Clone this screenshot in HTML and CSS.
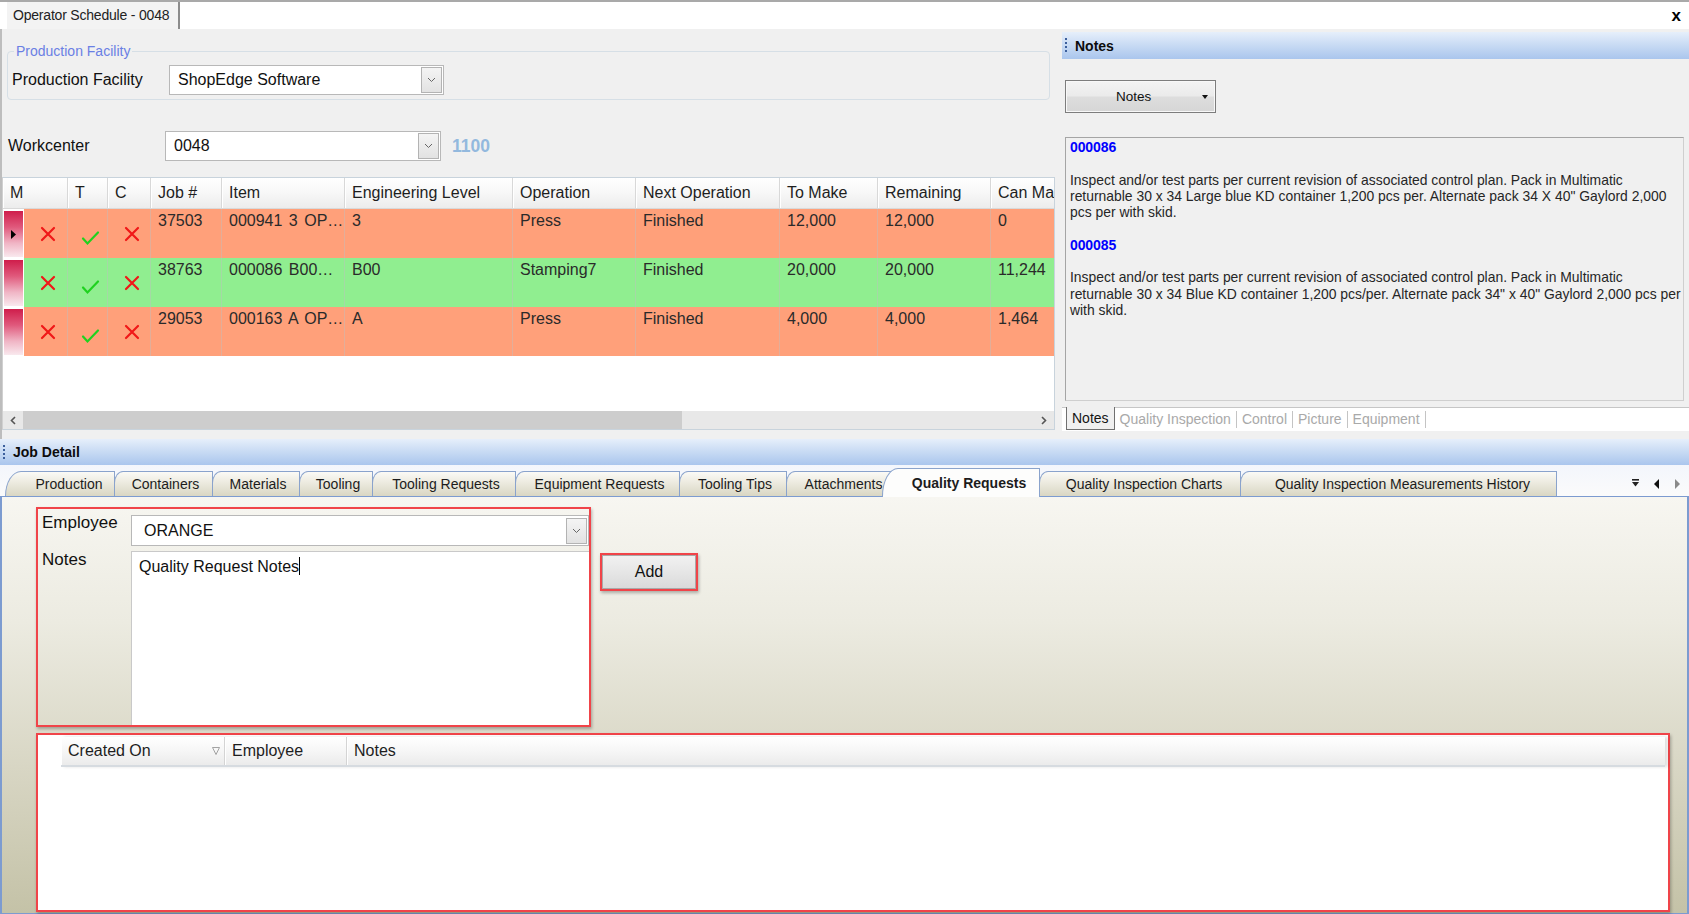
FILE: index.html
```html
<!DOCTYPE html>
<html lang="en">
<head>
<meta charset="utf-8">
<title>Operator Schedule - 0048</title>
<link rel="stylesheet" href="styles.css">
</head>
<body>
<div class="app">
  <header class="doctabs">
    <div class="doctab">Operator Schedule - 0048</div>
    <div class="doc-close">x</div>
  </header>

  <section class="top">
    <div class="left">
      <fieldset class="group">
        <legend>Production Facility</legend>
        <div class="field-row">
          <span class="lbl pf-lbl">Production Facility</span>
          <div class="combo pf-combo"><span class="combo-val">ShopEdge Software</span><span class="drop"><svg width="9" height="6" viewBox="0 0 9 6"><path d="M1 1 L4.5 4.5 L8 1" stroke="#666" stroke-width="1" fill="none"/></svg></span></div>
        </div>
      </fieldset>

      <div class="wc-row">
        <span class="lbl wc-lbl">Workcenter</span>
        <div class="combo wc-combo"><span class="combo-val">0048</span><span class="drop"><svg width="9" height="6" viewBox="0 0 9 6"><path d="M1 1 L4.5 4.5 L8 1" stroke="#666" stroke-width="1" fill="none"/></svg></span></div>
        <span class="wc-num">1100</span>
      </div>

      <div class="grid">
        <div class="grid-body">
          <div class="g-row g-head">
            <div class="hc hc-m">M</div>
            <div class="hc">T</div>
            <div class="hc">C</div>
            <div class="hc">Job #</div>
            <div class="hc">Item</div>
            <div class="hc">Engineering Level</div>
            <div class="hc">Operation</div>
            <div class="hc">Next Operation</div>
            <div class="hc">To Make</div>
            <div class="hc">Remaining</div>
            <div class="hc">Can Make</div>
          </div>

          <div class="g-row g-data salmon">
            <div class="sel"><span class="sel-bar"><svg class="sel-arrow" width="5" height="9" viewBox="0 0 5 9"><path d="M0 0 L5 4.5 L0 9Z" fill="#000"/></svg></span></div>
            <div class="c c-icon"><svg width="18" height="18" viewBox="0 0 18 18"><path d="M3 3 L15 15 M15 3 L3 15" stroke="#f01818" stroke-width="2.2" stroke-linecap="round"/></svg></div>
            <div class="c c-icon c-chk"><svg width="19" height="16" viewBox="0 0 19 16"><path d="M2 8.5 L6.5 13.5 L17 2.5" stroke="#1fd21f" stroke-width="2.2" fill="none" stroke-linecap="round"/></svg></div>
            <div class="c c-icon"><svg width="18" height="18" viewBox="0 0 18 18"><path d="M3 3 L15 15 M15 3 L3 15" stroke="#f01818" stroke-width="2.2" stroke-linecap="round"/></svg></div>
            <div class="c">37503</div>
            <div class="c c-item">000941 3 OP…</div>
            <div class="c">3</div>
            <div class="c">Press</div>
            <div class="c">Finished</div>
            <div class="c">12,000</div>
            <div class="c">12,000</div>
            <div class="c">0</div>
          </div>

          <div class="g-row g-data green">
            <div class="sel"><span class="sel-bar"></span></div>
            <div class="c c-icon"><svg width="18" height="18" viewBox="0 0 18 18"><path d="M3 3 L15 15 M15 3 L3 15" stroke="#f01818" stroke-width="2.2" stroke-linecap="round"/></svg></div>
            <div class="c c-icon c-chk"><svg width="19" height="16" viewBox="0 0 19 16"><path d="M2 8.5 L6.5 13.5 L17 2.5" stroke="#1fd21f" stroke-width="2.2" fill="none" stroke-linecap="round"/></svg></div>
            <div class="c c-icon"><svg width="18" height="18" viewBox="0 0 18 18"><path d="M3 3 L15 15 M15 3 L3 15" stroke="#f01818" stroke-width="2.2" stroke-linecap="round"/></svg></div>
            <div class="c">38763</div>
            <div class="c c-item">000086 B00…</div>
            <div class="c">B00</div>
            <div class="c">Stamping7</div>
            <div class="c">Finished</div>
            <div class="c">20,000</div>
            <div class="c">20,000</div>
            <div class="c">11,244</div>
          </div>

          <div class="g-row g-data salmon">
            <div class="sel"><span class="sel-bar"></span></div>
            <div class="c c-icon"><svg width="18" height="18" viewBox="0 0 18 18"><path d="M3 3 L15 15 M15 3 L3 15" stroke="#f01818" stroke-width="2.2" stroke-linecap="round"/></svg></div>
            <div class="c c-icon c-chk"><svg width="19" height="16" viewBox="0 0 19 16"><path d="M2 8.5 L6.5 13.5 L17 2.5" stroke="#1fd21f" stroke-width="2.2" fill="none" stroke-linecap="round"/></svg></div>
            <div class="c c-icon"><svg width="18" height="18" viewBox="0 0 18 18"><path d="M3 3 L15 15 M15 3 L3 15" stroke="#f01818" stroke-width="2.2" stroke-linecap="round"/></svg></div>
            <div class="c">29053</div>
            <div class="c c-item">000163 A OP…</div>
            <div class="c">A</div>
            <div class="c">Press</div>
            <div class="c">Finished</div>
            <div class="c">4,000</div>
            <div class="c">4,000</div>
            <div class="c">1,464</div>
          </div>
        </div>

        <div class="hscroll">
          <span class="sb-arrow"><svg width="6" height="9" viewBox="0 0 6 9"><path d="M5 1 L1.5 4.5 L5 8" stroke="#555" stroke-width="1.6" fill="none"/></svg></span>
          <span class="sb-thumb"></span>
          <span class="sb-track"></span>
          <span class="sb-arrow"><svg width="6" height="9" viewBox="0 0 6 9"><path d="M1 1 L4.5 4.5 L1 8" stroke="#555" stroke-width="1.6" fill="none"/></svg></span>
        </div>
      </div>
    </div>

    <aside class="right">
      <div class="panel-head notes-head"><span class="grip"></span>Notes</div>
      <div class="notes-btn"><span class="nb-text">Notes</span><svg class="nb-caret" width="6" height="4" viewBox="0 0 6 4"><path d="M0 0 H6 L3 4Z" fill="#111"/></svg></div>
      <div class="notes-box">
        <div class="note-id">000086</div>
        <p class="note-p">Inspect and/or test parts per current revision of associated control plan. Pack in Multimatic<br>returnable 30 x 34 Large blue KD container 1,200 pcs per. Alternate pack 34 X 40" Gaylord 2,000<br>pcs per with skid.</p>
        <div class="note-id">000085</div>
        <p class="note-p">Inspect and/or test parts per current revision of associated control plan. Pack in Multimatic<br>returnable 30 x 34 Blue KD container 1,200 pcs/per. Alternate pack 34" x 40" Gaylord 2,000 pcs per<br>with skid.</p>
      </div>
      <nav class="note-tabs">
        <span class="ntab ntab-active">Notes</span>
        <span class="ntab">Quality Inspection</span>
        <span class="ntab">Control</span>
        <span class="ntab">Picture</span>
        <span class="ntab">Equipment</span>
      </nav>
    </aside>
  </section>

  <section class="detail">
    <div class="panel-head detail-head"><span class="grip"></span>Job Detail</div>
    <nav class="tabstrip">
      <span class="tab tab-first">Production</span>
      <span class="tab w-cont">Containers</span>
      <span class="tab w-mat">Materials</span>
      <span class="tab w-tool">Tooling</span>
      <span class="tab w-treq">Tooling Requests</span>
      <span class="tab w-ereq">Equipment Requests</span>
      <span class="tab w-tips">Tooling Tips</span>
      <span class="tab w-att">Attachments</span>
      <span class="tab tab-active">Quality Requests</span>
      <span class="tab w-qic">Quality Inspection Charts</span>
      <span class="tab w-qimh">Quality Inspection Measurements History</span>
      <span class="tab-tools">
        <svg width="9" height="9" viewBox="0 0 9 9"><rect x="1" y="0" width="7" height="1.6" fill="#222"/><path d="M1 3 H8 L4.5 7.5Z" fill="#222"/></svg>
        <svg width="6" height="10" viewBox="0 0 6 10"><path d="M5 0 V10 L0 5Z" fill="#111"/></svg>
        <svg width="6" height="10" viewBox="0 0 6 10"><path d="M1 0 V10 L6 5Z" fill="#8a8a8a"/></svg>
      </span>
    </nav>

    <div class="content">
      <div class="qr-top">
        <div class="redbox qr-form">
          <span class="qr-lbl">Employee</span>
          <div class="combo emp-combo"><span class="combo-val">ORANGE</span><span class="drop"><svg width="9" height="6" viewBox="0 0 9 6"><path d="M1 1 L4.5 4.5 L8 1" stroke="#666" stroke-width="1" fill="none"/></svg></span></div>
          <span class="qr-lbl">Notes</span>
          <div class="qr-notes">Quality Request Notes<span class="caret"></span></div>
        </div>
        <div class="redbox add-wrap"><button class="add-btn" type="button">Add</button></div>
      </div>

      <div class="redbox qr-grid">
        <div class="qg-head">
          <div class="qh qh-created">Created On<svg class="sort" width="8" height="8" viewBox="0 0 8 8"><path d="M0.5 0.5 H7.5 L4 7.5Z" stroke="#999" stroke-width="0.9" fill="none"/></svg></div>
          <div class="qh qh-emp">Employee</div>
          <div class="qh qh-notes">Notes</div>
        </div>
      </div>
    </div>
  </section>
</div>
</body>
</html>
```

FILE: styles.css
```css
* { box-sizing: border-box; }
html, body { margin: 0; padding: 0; }
body {
  width: 1689px;
  height: 914px;
  overflow: hidden;
  background: #f0f0f0;
  font-family: "Liberation Sans", Arial, sans-serif;
  color: #1b1b1b;
}
.app { display: flex; flex-direction: column; height: 914px; }

/* document tab bar */
.doctabs {
  flex: none;
  height: 29px;
  display: flex;
  align-items: flex-end;
  background: #fff;
  border-top: 2px solid #a9a9a9;
}
.doctab {
  height: 27px;
  margin-left: 7px;
  padding: 0 9px 0 6px;
  background: #f3f3f3;
  border-right: 2px solid #8c8c8c;
  font-size: 14px;
  line-height: 27px;
  color: #222;
  letter-spacing: -0.2px;
}
.doc-close {
  margin-left: auto;
  margin-right: 8px;
  align-self: center;
  font-weight: bold;
  font-size: 17px;
  line-height: 17px;
  color: #000;
}

/* upper area */
.top { flex: none; height: 410px; display: flex; }
.left {
  flex: none;
  width: 1062px;
  border-left: 2px solid #bdbdbd;
  display: flex;
  flex-direction: column;
}
.group {
  margin: 15px 0 0 5px;
  width: 1043px;
  padding: 7px 0 4px 4px;
  border: 1px solid #d6dfe6;
  border-radius: 4px;
  min-width: 0;
}
.group legend {
  padding: 0 2px;
  margin-left: 2px;
  font-size: 14px;
  line-height: 14px;
  color: #6a7fe4;
}
.field-row { display: flex; align-items: center; height: 30px; }
.lbl { font-size: 16px; color: #111; }
.pf-lbl { width: 157px; }

.combo {
  display: flex;
  align-items: center;
  height: 30px;
  background: #fff;
  border: 1px solid #b8b8b8;
  font-size: 16px;
  color: #111;
}
.combo-val { flex: 1; padding-left: 8px; white-space: nowrap; }
.drop {
  flex: none;
  width: 21px;
  height: 26px;
  margin-right: 1px;
  border: 1px solid #b3b3b3;
  background: linear-gradient(#f4f4f4, #e2e2e2);
  display: flex;
  align-items: center;
  justify-content: center;
}
.pf-combo { width: 275px; }

.wc-row { display: flex; align-items: center; height: 30px; margin-top: 31px; padding-left: 6px; }
.wc-lbl { width: 157px; }
.wc-combo { width: 276px; }
.wc-num { margin-left: 11px; font-size: 17.5px; font-weight: bold; color: #93b9de; }

/* job grid */
.grid {
  margin-top: 16px;
  width: 1053px;
  height: 253px;
  border: 1px solid #c8d3dc;
  border-left-color: #d0d0d0;
  background: #fff;
  display: flex;
  flex-direction: column;
  overflow: hidden;
}
.grid-body { flex: 1; overflow: hidden; }
.g-row {
  display: grid;
  grid-template-columns: 21px 44px 40px 43px 71px 123px 168px 123px 144px 98px 113px 90px;
  width: max-content;
}
.g-head {
  height: 31px;
  background: linear-gradient(#ffffff, #f7f7f7 50%, #ececec);
  border-bottom: 1px solid #d9d9d9;
}
.hc {
  display: flex;
  align-items: center;
  padding-left: 7px;
  font-size: 16px;
  color: #1e1e1e;
  border-right: 1px solid #d8d8d8;
  box-shadow: inset 1px 0 0 #ffffff;
  white-space: nowrap;
  overflow: hidden;
}
.hc-m { grid-column: span 2; }

.g-data { height: 49px; }
.sel { background: #fff; padding: 2px 1px 1px 1px; }
.sel-bar {
  display: flex;
  align-items: center;
  height: 100%;
  padding-left: 7px;
  background: linear-gradient(#cf1d4b, #e0597c 35%, #f0b5c5 70%, #f9e9ee);
}
.c {
  font-size: 16px;
  color: #2a2a2a;
  padding: 3px 0 0 7px;
  white-space: pre;
  overflow: hidden;
  border-right: 1px solid rgba(190, 190, 190, 0.45);
}
.c-item { word-spacing: 2px; }
.salmon .c { background: #ffa07a; }
.green .c { background: #90ee90; }
.c-icon { display: flex; align-items: center; justify-content: center; padding: 0 0 0 5px; }
.c-chk svg { margin-top: 8px; }

.hscroll { flex: none; height: 18px; display: flex; align-items: center; background: #e8e8e8; }
.sb-arrow { width: 20px; display: flex; justify-content: center; }
.sb-thumb { width: 659px; height: 18px; background: #cdcdcd; }
.sb-track { flex: 1; }

/* right panel */
.right { flex: 1; display: flex; flex-direction: column; }
.panel-head {
  display: flex;
  align-items: center;
  font-weight: bold;
  font-size: 14px;
  color: #0c0c0c;
  background: linear-gradient(#e6effb, #cadcf4 45%, #aac6ed);
}
.grip {
  width: 2px;
  height: 15px;
  margin: 0 8px 0 3px;
  background: repeating-linear-gradient(#3c5f9c 0 2px, transparent 2px 4px);
}
.notes-head { height: 27px; margin-top: 3px; }

.notes-btn {
  margin: 21px 0 0 3px;
  width: 151px;
  height: 33px;
  display: flex;
  align-items: center;
  border: 1px solid #7d7d7d;
  box-shadow: inset 0 0 0 1px #f8f8f8;
  background: linear-gradient(#f3f3f3, #ebebeb 48%, #dddddd 52%, #d6d6d6);
  font-size: 13.5px;
  color: #111;
}
.nb-text { margin-left: 50px; }
.nb-caret { margin-left: 51px; }

.notes-box {
  margin: 24px 0 0 3px;
  width: 619px;
  height: 264px;
  padding: 1px 4px 0 4px;
  border: 1px solid #a5a5a5;
  border-right-color: #cfcfcf;
  border-bottom-color: #cfcfcf;
  background: #f0f0f0;
  font-size: 13.9px;
  line-height: 16.3px;
  color: #262626;
  white-space: nowrap;
  overflow: hidden;
}
.note-id {
  color: #0000ff;
  font-weight: bold;
  font-size: 14px;
  letter-spacing: -0.1px;
  margin-bottom: 16.3px;
}
.note-p { margin: 0 0 16.3px 0; }

.note-tabs {
  margin-top: 6px;
  height: 24px;
  display: flex;
  align-items: flex-start;
  padding-left: 4px;
  background: #fff;
  border-top: 1px solid #c6c6c6;
  font-size: 14px;
}
.ntab {
  height: 17px;
  margin-top: 3px;
  padding: 0 5px;
  line-height: 17px;
  color: #a9a9a9;
  border-right: 1px solid #c4c4c4;
}
.ntab-active {
  height: 23px;
  margin-top: -1px;
  line-height: 23px;
  padding: 0 5px;
  color: #141414;
  background: #f0f0f0;
  border: 1px solid #707070;
  border-top: none;
}

/* job detail */
.detail { flex: 1; display: flex; flex-direction: column; }
.detail-head { flex: none; height: 26px; }

.tabstrip {
  flex: none;
  height: 31px;
  display: flex;
  align-items: flex-end;
  padding-left: 5px;
  background: linear-gradient(#f3f6fc, #fbfbfb);
}
.tab {
  position: relative;
  flex: none;
  height: 25px;
  margin-left: -1px;
  padding-left: 4px;
  display: flex;
  align-items: center;
  justify-content: center;
  font-size: 14px;
  color: #1c1c1c;
  white-space: nowrap;
  border: 1px solid #8aa3cc;
  border-bottom: none;
  border-top-left-radius: 9px 12px;
  background: linear-gradient(#fbfaf6, #eceadf 45%, #d9d6c3);
}
.tab-first { margin-left: 0; width: 110px; padding-left: 18px; border-top-left-radius: 16px 25px; }
.w-cont { width: 99px; }
.w-mat { width: 88px; }
.w-tool { width: 74px; }
.w-treq { width: 144px; }
.w-ereq { width: 165px; }
.w-tips { width: 108px; }
.w-att { width: 111px; }
.tab-active {
  z-index: 2;
  width: 158px;
  height: 29px;
  margin-left: -15px;
  margin-bottom: -1px;
  padding-left: 16px;
  font-weight: bold;
  background: #fdfdfc;
  border-top-left-radius: 16px 28px;
}
.w-qic { width: 202px; padding-left: 8px; }
.w-qimh { width: 317px; padding-left: 8px; }
.tab-tools {
  margin-left: auto;
  margin-right: 9px;
  align-self: center;
  margin-top: 6px;
  display: flex;
  align-items: center;
  gap: 14px;
}

.content {
  flex: 1;
  border: 1px solid #7c9bd0;
  border-left-width: 2px;
  border-right-width: 2px;
  padding: 10px 0 0 34px;
  background: linear-gradient(#f7f6f1, #ecebe1 30%, #d8d6c4 65%, #c4c2a7);
}
.qr-top { display: flex; align-items: flex-start; }
.redbox {
  border: 2px solid #f04449;
  box-shadow: 1px 2px 3px rgba(0, 0, 0, 0.28);
}
.qr-form {
  width: 555px;
  height: 220px;
  display: grid;
  grid-template-columns: 93px 1fr;
  grid-template-rows: 37px 1fr;
}
.qr-lbl { font-size: 17px; color: #111; padding: 4px 0 0 4px; }
.emp-combo { margin-top: 6px; height: 31px; }
.emp-combo .combo-val { padding-left: 12px; }
.qr-notes {
  margin-top: 5px;
  background: #fff;
  border-top: 1px solid #c9c9c9;
  border-left: 1px solid #c9c9c9;
  padding: 5px 0 0 7px;
  font-size: 16px;
  color: #111;
}
.caret { display: inline-block; width: 1px; height: 18px; background: #000; vertical-align: -3px; }

.add-wrap { margin: 46px 0 0 9px; width: 98px; height: 38px; }
.add-btn {
  display: block;
  width: 100%;
  height: 100%;
  margin: 0;
  border: 1px solid #a9a9a9;
  background: linear-gradient(#f1f1f1, #e6e6e6 50%, #dadada);
  font-family: "Liberation Sans", Arial, sans-serif;
  font-size: 16px;
  color: #111;
}

.qr-grid {
  margin-top: 6px;
  width: 1634px;
  height: 179px;
  background: #fff;
  padding: 2px 0 0 23px;
}
.qg-head {
  display: flex;
  width: 1604px;
  height: 30px;
  background: linear-gradient(#ffffff, #f6f6f6 50%, #ebebeb);
  border-bottom: 2px solid #d6dbe0;
  box-shadow: 3px 0 3px rgba(0, 0, 0, 0.12);
}
.qh {
  display: flex;
  align-items: center;
  padding-left: 7px;
  font-size: 16px;
  color: #1e1e1e;
  border-right: 1px solid #d4d4d4;
  box-shadow: inset 1px 0 0 #fff;
}
.qh-created { width: 164px; }
.sort { margin-left: 61px; }
.qh-emp { width: 122px; }
.qh-notes { flex: 1; border-right: none; }
```
